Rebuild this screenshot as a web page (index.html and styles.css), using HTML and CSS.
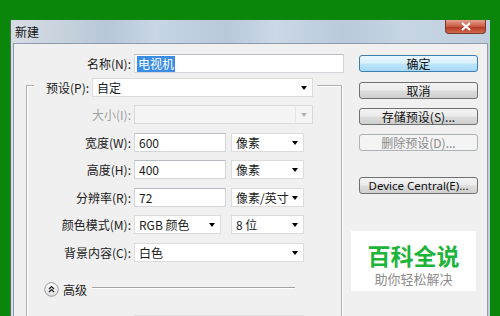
FILE: index.html
```html
<!DOCTYPE html>
<html>
<head>
<meta charset="utf-8">
<link rel="stylesheet" href="styles.css">
</head>
<body>
<div class="window">
  <div class="titlebar">
    <span class="title">新建</span>
    <div class="close">
      <svg width="12" height="9" viewBox="0 0 12 9"><path d="M2 1 L10 8 M10 1 L2 8" stroke="#fff" stroke-width="2.2" fill="none"/></svg>
    </div>
  </div>
  <div class="body">
    <div class="form">
      <div class="row top">
        <label class="lbl">名称(N):</label>
        <div class="input name"><span class="hl">电视机</span></div>
      </div>
      <div class="group">
        <div class="group-head">
          <label class="head-lbl">预设(P):</label>
          <div class="select preset">自定<i class="arrow"></i></div>
        </div>
        <div class="row first">
          <label class="lbl disabled">大小(I):</label>
          <div class="select size dis"><span class="sep"></span><i class="arrow grey"></i></div>
        </div>
        <div class="row">
          <label class="lbl">宽度(W):</label>
          <div class="input num">600</div>
          <div class="select unit">像素<i class="arrow"></i></div>
        </div>
        <div class="row">
          <label class="lbl">高度(H):</label>
          <div class="input num">400</div>
          <div class="select unit">像素<i class="arrow"></i></div>
        </div>
        <div class="row">
          <label class="lbl">分辨率(R):</label>
          <div class="input num">72</div>
          <div class="select unit">像素/英寸<i class="arrow"></i></div>
        </div>
        <div class="row">
          <label class="lbl">颜色模式(M):</label>
          <div class="select mode">RGB 颜色<i class="arrow"></i></div>
          <div class="select unit">8 位<i class="arrow"></i></div>
        </div>
        <div class="row">
          <label class="lbl">背景内容(C):</label>
          <div class="select bg">白色<i class="arrow"></i></div>
        </div>
        <div class="adv">
          <svg class="circle" width="15" height="15" viewBox="0 0 15 15">
            <defs><linearGradient id="g" x1="0" y1="0" x2="0" y2="1"><stop offset="0" stop-color="#ffffff"/><stop offset="1" stop-color="#dcdcdc"/></linearGradient></defs>
            <circle cx="7.5" cy="7.5" r="6.8" fill="url(#g)" stroke="#9a9a9a" stroke-width="1"/>
            <path d="M5 7 L7.5 4.6 L10 7 M5 10 L7.5 7.6 L10 10" stroke="#222" stroke-width="1.3" fill="none"/>
          </svg>
          <span class="adv-text">高级</span>
          <span class="rule"></span>
        </div>
        <div class="row last">
          <label class="lbl"></label>
          <div class="select bg"></div>
        </div>
      </div>
    </div>
    <div class="side">
      <div class="btn default">确定</div>
      <div class="btn">取消</div>
      <div class="btn">存储预设(S)...</div>
      <div class="btn dis">删除预设(D)...</div>
      <div class="btn device">Device Central(E)...</div>
      <div class="mark">
        <div class="mark-big">百科全说</div>
        <div class="mark-small">助你轻松解决</div>
      </div>
    </div>
  </div>
</div>
</body>
</html>
```
FILE: styles.css
```css
html, body {
  margin: 0;
  padding: 0;
}
body {
  background: #0a870b;
  width: 500px;
  height: 316px;
  overflow: hidden;
  font-family: "Noto Sans CJK SC", "Noto Sans", sans-serif;
  font-size: 12px;
  color: #1a1a1a;
}
.window {
  margin: 20px 0 0 10px;
  width: 480px;
  height: 296px;
  box-sizing: border-box;
  padding: 0 2px;
  background: linear-gradient(90deg, #d6dce3 0%, #c9d3de 10%, #b7c7d8 20%, #c8d6e5 30%, #b8c9db 45%, #cbd8e6 55%, #b9cadb 70%, #c7d5e3 82%, #bfcfdf 100%);
  border-left: 1px solid #4f6f5a;
  position: relative;
  overflow: hidden;
}
.titlebar {
  height: 23px;
  display: flex;
  align-items: center;
}
.title {
  margin-left: 2px;
  font-size: 12px;
  color: #111;
}
.close {
  position: absolute;
  left: 434px;
  top: 0;
  width: 41px;
  height: 14px;
  box-sizing: border-box;
  border: 1px solid #7a3a2e;
  border-top: none;
  border-radius: 0 0 4px 4px;
  background: linear-gradient(#e6a08f, #c85a43 50%, #b43a22 55%, #cf6a4e);
  display: flex;
  align-items: center;
  justify-content: center;
}
.body {
  height: 300px;
  background: #f0f0f0;
  border: 1px solid #8d9bab;
  border-bottom: none;
  display: flex;
}
.form {
  width: 335px;
  flex: none;
}
.row {
  display: flex;
  height: 19px;
  align-items: stretch;
  margin-top: 8.6px;
}
.row.top {
  margin-top: 10px;
}
.row.first {
  margin-top: 8px;
}
.lbl {
  width: 104px;
  margin-right: 3px;
  text-align: right;
  line-height: 19px;
  flex: none;
}
.row.top .lbl {
  width: 117px;
}
.disabled {
  color: #a2a2a2;
}
.input, .select {
  box-sizing: border-box;
  height: 19px;
  background: #fff;
  border: 1px solid #d2d6db;
  border-top-color: #b9bdc3;
  line-height: 17px;
  padding-left: 4px;
  position: relative;
  flex: none;
}
.input.name {
  width: 210px;
  padding-left: 2px;
}
.hl {
  display: inline-block;
  background: #3a8de3;
  color: #fff;
  padding: 0 1px;
  line-height: 16px;
  margin-top: 1px;
  vertical-align: top;
}
.input.num {
  width: 92px;
}
.select {
  border-color: #dcdcdc;
}
.select.unit {
  width: 73px;
  margin-left: 5px;
}
.select.mode {
  width: 87px;
}
.select.mode + .select.unit {
  margin-left: 10px;
}
.select.bg {
  width: 170px;
}
.select.size {
  width: 179px;
}
.select.preset {
  width: 221px;
}
.select.dis {
  background: #f4f4f4;
  border-color: #d9d9d9;
}
.sep {
  position: absolute;
  right: 16px;
  top: 1px;
  bottom: 1px;
  border-left: 1px solid #e6e6e6;
}
.arrow {
  position: absolute;
  right: 5px;
  top: 7px;
  width: 0;
  height: 0;
  border-left: 3.5px solid transparent;
  border-right: 3.5px solid transparent;
  border-top: 4px solid #000;
}
.arrow.grey {
  border-top-color: #b5b5b5;
}
.group {
  margin: 12px 0 0 12px;
  width: 316px;
  height: 260px;
  box-sizing: border-box;
  border: 1px solid #b0b0b0;
  border-bottom: none;
  box-shadow: inset 1px 1px 0 #fff, 1px 0 0 #fff;
}
.group-head {
  display: flex;
  width: fit-content;
  margin: -8px 0 0 7px;
  padding: 0 4px 0 12px;
  background: #f0f0f0;
  height: 19px;
}
.head-lbl {
  line-height: 19px;
  margin-right: 3px;
}
.adv {
  display: flex;
  align-items: center;
  height: 15px;
  margin-top: 20px;
  padding-left: 17px;
}
.circle {
  display: block;
  flex: none;
}
.adv-text {
  margin-left: 4px;
  font-size: 12px;
  line-height: 15px;
}
.rule {
  margin-left: 5px;
  width: 203px;
  height: 0;
  border-top: 1px solid #a3a3a3;
  border-bottom: 1px solid #fff;
  margin-top: -3px;
}
.row.last {
  margin-top: 18px;
}
.side {
  width: 119px;
  margin-left: 10px;
  padding-top: 11px;
  flex: none;
}
.btn {
  box-sizing: border-box;
  height: 17px;
  border: 1px solid #707070;
  border-radius: 3px;
  background: linear-gradient(#f3f3f3 0%, #ebebeb 48%, #dddddd 52%, #cfcfcf 100%);
  text-align: center;
  line-height: 15px;
  font-size: 12px;
  color: #111;
  margin-bottom: 9px;
}
.btn.default {
  border-color: #3c7fb1;
  background: linear-gradient(#eaf6fd 0%, #d9f0fc 48%, #bee6fd 52%, #a7d9f5 100%);
  margin-bottom: 10px;
}
.btn.dis {
  border-color: #adb2b5;
  background: #f4f4f4;
  color: #8a8a8a;
  margin-bottom: 26px;
}
.btn.device {
  font-family: "Noto Sans", "Open Sans", sans-serif;
  font-size: 11.5px;
}
.mark {
  margin: 37px 0 0 -8px;
  width: 125px;
  height: 60px;
  box-sizing: border-box;
  padding-top: 14px;
  background: #fff;
  text-align: center;
  font-family: "Liberation Sans", "Noto Sans CJK SC", sans-serif;
}
.mark-big {
  font-size: 23px;
  font-weight: bold;
  line-height: 24px;
  height: 24px;
  color: #1eb43a;
}
.mark-small {
  margin-top: 3px;
  font-size: 13px;
  line-height: 15px;
  height: 15px;
  color: #8c8c8c;
}
```
